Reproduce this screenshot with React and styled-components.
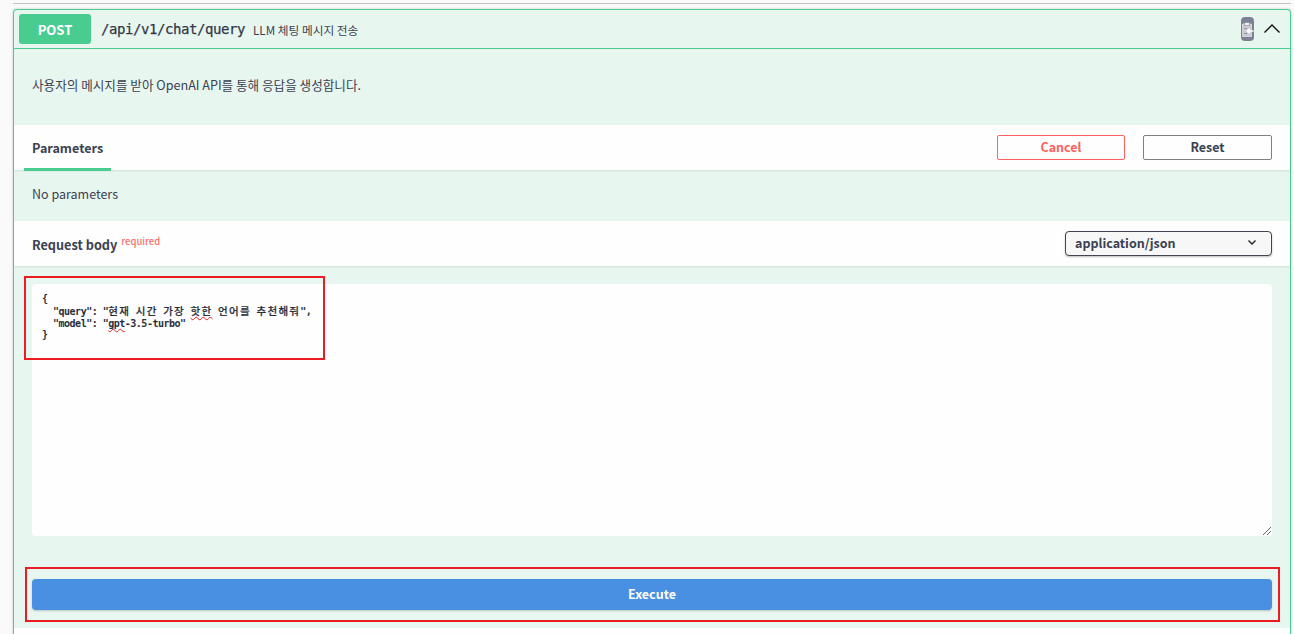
import React from "react";
import styled, { createGlobalStyle } from "styled-components";

const Global = createGlobalStyle`
  html, body { margin: 0; padding: 0; background: #fafafa; height: 634px; overflow: hidden; }
  body { font-family: "Noto Sans CJK KR", "Noto Sans", sans-serif; color: #3b4151; }
`;
const Page = styled.div`position: relative; height: 634px; overflow: hidden; padding: 3px 3px 0 13px; box-sizing: border-box;`;
const TopRule = styled.div`height: 1px; background: #c4c4c4; margin-bottom: 5px;`;
const Card = styled.section`
  background: #e8f6f0; border: 1px solid #49cc90; border-bottom: none; border-radius: 4px 4px 0 0;
  box-shadow: 0 0 3px rgba(0,0,0,.19);
`;
const Header = styled.header`
  display: flex; align-items: center; height: 38px; padding: 0 5px; border-bottom: 1px solid #49cc90;
`;
const Badge = styled.span`
  width: 72px; height: 30px; display: flex; align-items: center; justify-content: center;
  background: #49cc90; color: #fff; border-radius: 3px; font-size: 13px; font-weight: 700;
`;
const Path = styled.span`
  margin-left: 10px; font: 500 14px/1 "DejaVu Sans Mono", monospace; letter-spacing: -.43px; color: #343846;
  -webkit-text-stroke: .25px #343846;
`;
const Summary = styled.span`margin-left: 8px; font-size: 11.7px; color: #3b4151;`;
const HeaderIcons = styled.div`margin-left: auto; display: flex; align-items: center; gap: 8px; padding-right: 3px;`;
const CopyChip = styled.span`
  width: 13px; height: 24px; background: #7d8293; border-radius: 4px; display: flex; align-items: center; justify-content: center;
`;
const Description = styled.div`height: 76px; box-sizing: border-box; padding: 0 0 6px 18px; display: flex; align-items: center; font-size: 12.6px;`;
const Bar = styled.div`
  display: flex; align-items: center; justify-content: space-between; height: 45px; background: #fdfefd;
  padding: 0 18px 0 10px; box-shadow: 0 1px 2px rgba(0,0,0,.1);
`;
const Tab = styled.div`
  align-self: stretch; width: 87px; margin-bottom: -1px; box-sizing: border-box; padding-left: 8px;
  display: flex; align-items: center; font-size: 12.6px; font-weight: 700; border-bottom: 3px solid #49cc90; padding-top: 1px;
`;
const Actions = styled.div`display: flex; gap: 18px;`;
const ActionButton = styled.button`
  width: ${p => p.$w}px; height: 25px; padding: 0 0 2px; background: transparent; border-radius: 2px;
  border: 1px solid ${p => p.$color}; color: ${p => p.$text}; font: 700 12.5px "Noto Sans CJK KR", "Noto Sans", sans-serif;
`;
const NoParams = styled.div`height: 51px; box-sizing: border-box; padding: 0 0 4px 18px; display: flex; align-items: center; font-size: 12.5px;`;
const BodyLabel = styled.div`font-size: 12.7px; font-weight: 700; padding: 1px 0 0 8px; display: flex;`;
const Required = styled.span`font-size: 9.5px; color: #ff6f6f; font-weight: 500; margin: -1px 0 0 4px; line-height: 14px;`;
const Select = styled.div`
  width: 207px; height: 25px; margin-top: -1px; box-sizing: border-box; background: #f7f7f7; border: 1px solid #41444e; border-radius: 4px;
  box-shadow: 0 1px 2px rgba(0,0,0,.25); display: flex; align-items: center; justify-content: space-between;
  padding: 0 13px 2px 9px; font-size: 12.5px; font-weight: 700;
`;
const BodyArea = styled.div`padding: 18px 18px 18px;`;
const CodeBox = styled.div`position: relative; height: 252px; background: #fdfefd; border-radius: 4px;`;
const Code = styled.pre`
  margin: 0; padding: 9px 10px; font: 700 10px/11.8px "DejaVu Sans Mono", monospace; letter-spacing: -.5px; color: #2b2f3a;
`;
const Hangul = styled.span`font: 500 10.5px/11.8px "Noto Sans CJK KR", sans-serif; letter-spacing: 1.3px; -webkit-text-stroke: .2px #2b2f3a;`;
const Squiggle = styled(Hangul)`text-decoration: underline wavy #e02020 1px; text-decoration-skip-ink: none; text-underline-offset: 1px;`;
const LatinSquiggle = styled.span`text-decoration: underline wavy #e02020 1px; text-decoration-skip-ink: none; text-underline-offset: 1px;`;
const Grip = styled.svg`position: absolute; right: 0; bottom: 0;`;
const ExecuteZone = styled.div`padding: 25px 18px 18px;`;
const Execute = styled.button`
  display: block; width: 100%; height: 31px; padding: 0 0 3px; background: #4990e2; color: #fff; border: 0; border-radius: 4px;
  font: 700 12.5px "Noto Sans CJK KR", "Noto Sans", sans-serif; box-shadow: 0 1px 2px rgba(0,0,0,.2);
`;
const BelowCard = styled.div`height: 10px; background: #fdfefd;`;
const Callout = styled.div`
  position: absolute; border: 2px solid #ed1c24; box-sizing: border-box; pointer-events: none;
  left: ${p => p.$x}px; top: ${p => p.$y}px; width: ${p => p.$w}px; height: ${p => p.$h}px;
`;

export default function App() {
  return (
    <>
      <Global />
      <Page>
        <TopRule />
        <Card>
          <Header>
            <Badge>POST</Badge>
            <Path>/api/v1/chat/query</Path>
            <Summary>LLM 체팅 메시지 전송</Summary>
            <HeaderIcons>
              <CopyChip>
                <svg width="13" height="17" viewBox="0 0 13 17">
                  <path d="M1.5 3h9v12.5h-9z" fill="#c9ccd3" stroke="#e6e7ea" strokeWidth=".7" />
                  <path d="M3.5 1.5h5v3h-5z" fill="#eef0f2" stroke="#7d8293" strokeWidth=".6" />
                  <path d="M3 7.5h3M3 12.5h3" stroke="#8b8f9e" strokeWidth="1" />
                  <path d="M6 10h6.5M8.7 7.8 6.3 10l2.4 2.2" fill="none" stroke="#fff" strokeWidth="1.4" />
                </svg>
              </CopyChip>
              <svg width="20" height="20" viewBox="0 0 20 20">
                <path d="M2.5 13.5 10 6l7.5 7.5" fill="none" stroke="#111" strokeWidth="1.4" />
              </svg>
            </HeaderIcons>
          </Header>
          <Description>사용자의 메시지를 받아 OpenAI API를 통해 응답을 생성합니다.</Description>
          <Bar>
            <Tab>Parameters</Tab>
            <Actions>
              <ActionButton $w={128} $color="#ff6060" $text="#ff6060">Cancel</ActionButton>
              <ActionButton $w={129} $color="#808080" $text="#3b4151">Reset</ActionButton>
            </Actions>
          </Bar>
          <NoParams>No parameters</NoParams>
          <Bar>
            <BodyLabel>Request body<Required>required</Required></BodyLabel>
            <Select>
              application/json
              <svg width="12" height="12" viewBox="0 0 12 12">
                <path d="M2.5 4.5 6 8l3.5-3.5" fill="none" stroke="#222" strokeWidth="1.4" />
              </svg>
            </Select>
          </Bar>
          <BodyArea>
            <CodeBox>
              <Code>
                {"{\n  \"query\": \""}<Hangul>현재</Hangul>{" "}<Hangul>시간</Hangul>{" "}<Hangul>가장</Hangul>{" "}<Squiggle>핫한</Squiggle>{" "}<Hangul>언어를</Hangul>{" "}<Hangul>추천해줘</Hangul>{"\",\n  \"model\": \""}<LatinSquiggle>gpt</LatinSquiggle>{"-3.5-turbo\"\n}"}
              </Code>
              <Grip width="10" height="10" viewBox="0 0 10 10">
                <path d="M1 9l8-8M5 9l4-4" stroke="#666" strokeWidth="1" />
              </Grip>
            </CodeBox>
          </BodyArea>
          <ExecuteZone>
            <Execute>Execute</Execute>
          </ExecuteZone>
          <BelowCard />
        </Card>
        <Callout $x={24} $y={276} $w={301} $h={84} />
        <Callout $x={25} $y={567} $w={1255} $h={55} />
      </Page>
    </>
  );
}
